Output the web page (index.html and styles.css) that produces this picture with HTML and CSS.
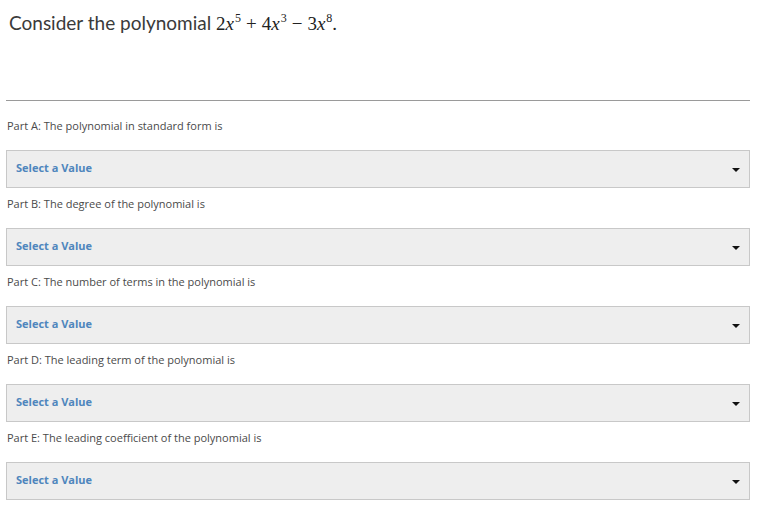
FILE: index.html
```html
<!DOCTYPE html>
<html>
<head>
<meta charset="utf-8">
<link rel="stylesheet" href="styles.css">
</head>
<body>
<div class="page">
  <h1 class="title">Consider the polynomial <span class="math">2<i>x</i><sup>5</sup><span class="op">+</span>4<i>x</i><sup>3</sup><span class="op">−</span>3<i>x</i><sup>8</sup>.</span></h1>
  <hr class="rule">
  <div class="parts">
    <div class="part">
      <div class="label">Part A: The polynomial in standard form is</div>
      <div class="select"><span class="placeholder">Select a Value</span><span class="caret"></span></div>
    </div>
    <div class="part">
      <div class="label">Part B: The degree of the polynomial is</div>
      <div class="select"><span class="placeholder">Select a Value</span><span class="caret"></span></div>
    </div>
    <div class="part">
      <div class="label">Part C: The number of terms in the polynomial is</div>
      <div class="select"><span class="placeholder">Select a Value</span><span class="caret"></span></div>
    </div>
    <div class="part">
      <div class="label">Part D: The leading term of the polynomial is</div>
      <div class="select"><span class="placeholder">Select a Value</span><span class="caret"></span></div>
    </div>
    <div class="part">
      <div class="label">Part E: The leading coefficient of the polynomial is</div>
      <div class="select"><span class="placeholder">Select a Value</span><span class="caret"></span></div>
    </div>
  </div>
</div>
</body>
</html>
```

FILE: styles.css
```css
html, body {
  margin: 0;
  padding: 0;
  background: #ffffff;
}
.page {
  width: 744px;
  padding: 0 0 0 6px;
  font-family: "Open Sans", "Liberation Sans", sans-serif;
}
.title {
  margin: 0;
  padding: 10px 0 0 3px;
  height: 34px;
  font-family: "Lato", "Liberation Sans", sans-serif;
  font-weight: 400;
  font-size: 19px;
  line-height: 26px;
  color: #3a3a3a;
}
.math {
  font-family: "Liberation Serif", "DejaVu Serif", serif;
  font-size: 19px;
  color: #222;
}
.math .op {
  margin: 0 5px;
}
.math sup {
  font-size: 12px;
  vertical-align: 8px;
  line-height: 0;
  margin-left: 1px;
}
.rule {
  margin: 56px 0 0 0;
  border: 0;
  border-top: 1px solid #9a9a9a;
  height: 0;
}
.parts {
  display: flex;
  flex-direction: column;
  padding-top: 16px;
}
.part {
  display: flex;
  flex-direction: column;
}
.label {
  font-size: 11px;
  line-height: 17px;
  color: #4a4a4a;
  padding-left: 1px;
  margin-bottom: 16px;
}
.select {
  box-sizing: border-box;
  height: 38px;
  border: 1px solid #c8c8c8;
  background: #eeeeee;
  display: flex;
  align-items: center;
  justify-content: space-between;
  padding: 0 9px 3px 9px;
  margin-bottom: 7px;
}
.placeholder {
  font-size: 11px;
  font-weight: 700;
  color: #4f86bd;
}
.caret {
  width: 0;
  height: 0;
  border-left: 4px solid transparent;
  border-right: 4px solid transparent;
  border-top: 4px solid #111;
  margin-top: 5px;
}
```
